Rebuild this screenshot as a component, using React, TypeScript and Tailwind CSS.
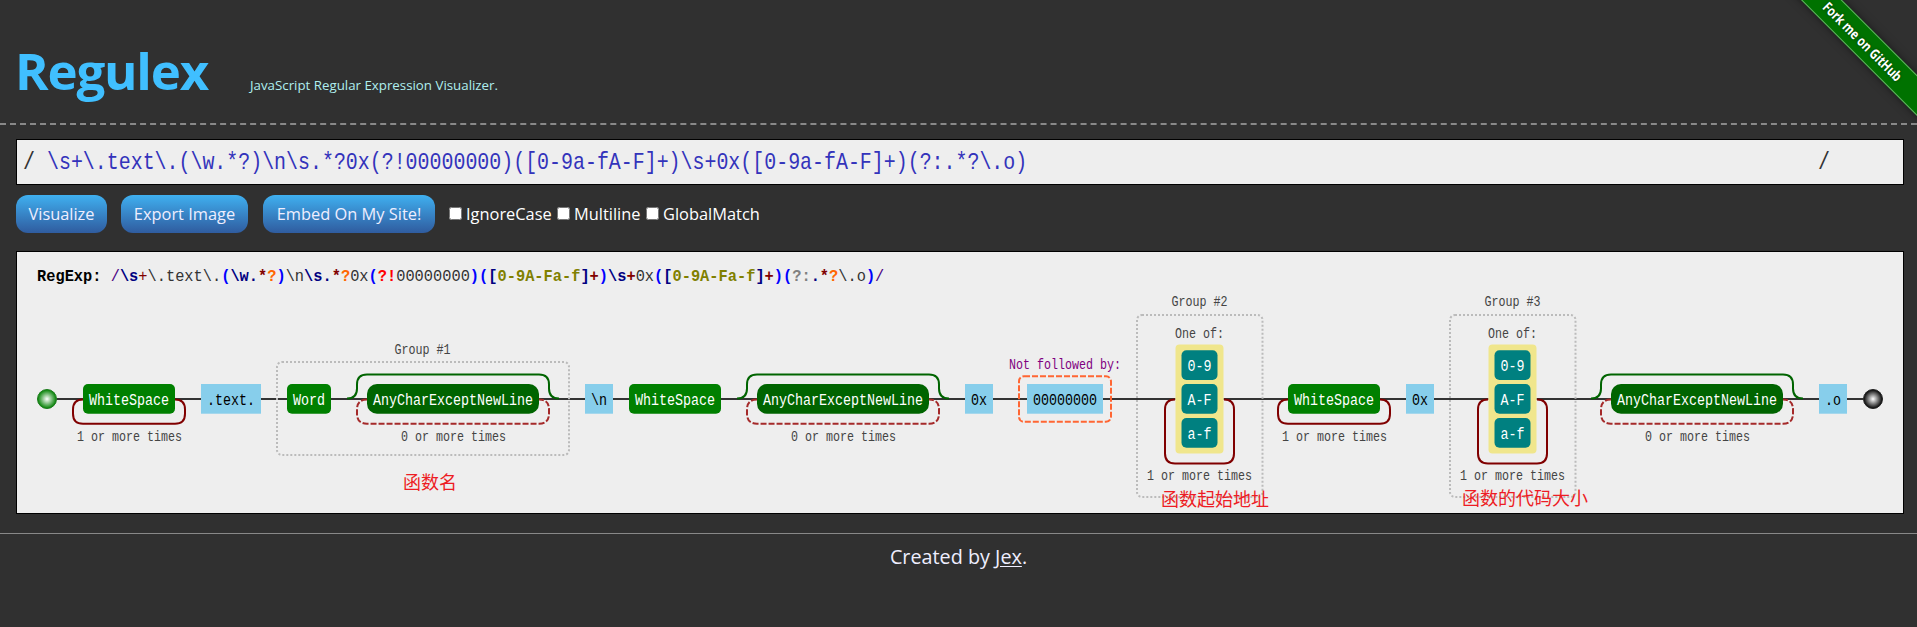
import React from "react";

const SANS = "font-['Open_Sans','Noto_Sans',sans-serif]";
const MONO = "'Liberation Mono', monospace";

type Tone = { s: string; c: string; b?: boolean };

const tokens: Tone[] = [
  { s: "RegExp:", c: "#000", b: true },
  { s: " ", c: "#000" },
  { s: "/", c: "#4b0082" },
  { s: "\\s", c: "#000080", b: true },
  { s: "+", c: "#800000" },
  { s: "\\.text\\.", c: "#333" },
  { s: "(", c: "#0000ff", b: true },
  { s: "\\w.", c: "#000080", b: true },
  { s: "*", c: "#800000", b: true },
  { s: "?", c: "#ff6600", b: true },
  { s: ")", c: "#0000ff", b: true },
  { s: "\\n", c: "#333" },
  { s: "\\s.", c: "#000080", b: true },
  { s: "*", c: "#800000", b: true },
  { s: "?", c: "#ff6600", b: true },
  { s: "0x", c: "#333" },
  { s: "(", c: "#0000ff", b: true },
  { s: "?!", c: "#ff0000", b: true },
  { s: "00000000", c: "#333" },
  { s: ")", c: "#0000ff", b: true },
  { s: "(", c: "#0000ff", b: true },
  { s: "[", c: "#000080", b: true },
  { s: "0-9A-Fa-f", c: "#808000", b: true },
  { s: "]", c: "#000080", b: true },
  { s: "+", c: "#800000", b: true },
  { s: ")", c: "#0000ff", b: true },
  { s: "\\s", c: "#000080", b: true },
  { s: "+", c: "#800000", b: true },
  { s: "0x", c: "#333" },
  { s: "(", c: "#0000ff", b: true },
  { s: "[", c: "#000080", b: true },
  { s: "0-9A-Fa-f", c: "#808000", b: true },
  { s: "]", c: "#000080", b: true },
  { s: "+", c: "#800000", b: true },
  { s: ")", c: "#0000ff", b: true },
  { s: "(", c: "#0000ff", b: true },
  { s: "?:", c: "#808080", b: true },
  { s: ".", c: "#000080", b: true },
  { s: "*", c: "#800000", b: true },
  { s: "?", c: "#ff6600", b: true },
  { s: "\\.o", c: "#333" },
  { s: ")", c: "#0000ff", b: true },
  { s: "/", c: "#4b0082" },
];

const tokenColumns = tokens.reduce((n, t) => n + t.s.length, 0);

function Mono({ x, y, size, fill, children }: {
  x: number; y: number; size: number; fill: string; children: string;
}) {
  return (
    <text
      x={x}
      y={y}
      fontFamily={MONO}
      fontSize={size}
      fill={fill}
      textLength={children.length * (size / 2)}
      lengthAdjust="spacingAndGlyphs"
    >
      {children}
    </text>
  );
}

function Label({ cx, y, children, fill = "#444" }: { cx: number; y: number; children: string; fill?: string }) {
  return <Mono x={cx - children.length * 3.5} y={y} size={14} fill={fill}>{children}</Mono>;
}

function Node({ x, y = 384, fill, color, r = 0, children }: {
  x: number; y?: number; fill: string; color: string; r?: number; children: string;
}) {
  return (
    <g>
      <rect x={x} y={y} width={children.length * 8 + 12} height={29.7} rx={r} fill={fill} />
      <Mono x={x + 6} y={y + 21} size={16} fill={color}>{children}</Mono>
    </g>
  );
}

function Exact({ x, children }: { x: number; children: string }) {
  return <Node x={x} fill="#87ceeb" color="#000">{children}</Node>;
}

function loopPath(x1: number, x2: number, bottom: number) {
  return `M${x1 + 10} 399.5q-10 0 -10 10V${bottom - 10}q0 10 10 10H${x2 - 10}q10 0 10 -10V409.5q0 -10 -10 -10`;
}

function Space({ x }: { x: number }) {
  return <Node x={x} fill="#008000" color="#fff" r={5}>WhiteSpace</Node>;
}

function LoopedSpace({ x }: { x: number }) {
  return (
    <g>
      <path d={loopPath(x - 10, x + 102, 423.7)} fill="none" stroke="#800000" strokeWidth={2} />
      <Space x={x} />
      <Label cx={x + 46.5} y={441}>1 or more times</Label>
    </g>
  );
}

function AnyChar({ x }: { x: number }) {
  return (
    <g>
      <path
        d={`M${x - 20} 398.5q10 0 10 -10V384.5q0 -10 10 -10H${x + 172}q10 0 10 10V388.5q0 10 10 10`}
        fill="none"
        stroke="#006400"
        strokeWidth={2}
      />
      <path d={loopPath(x - 10, x + 182, 423.7)} fill="none" stroke="#a52a2a" strokeWidth={2} strokeDasharray="6 2" />
      <Node x={x} fill="#006400" color="#fff" r={10}>AnyCharExceptNewLine</Node>
      <Label cx={x + 86.5} y={441}>0 or more times</Label>
    </g>
  );
}

function HexGroup({ x, n }: { x: number; n: number }) {
  const cx = x + 62.5;
  return (
    <g>
      <rect x={x} y={315} width={125.5} height={182} rx={5} fill="none" stroke="#bbb" strokeWidth={2} strokeDasharray="2 2" />
      <Label cx={cx} y={306}>{`Group #${n}`}</Label>
      <path d={loopPath(x + 28, x + 97, 463.5)} fill="none" stroke="#800000" strokeWidth={2} />
      <rect x={x + 38.5} y={344.5} width={48} height={109} rx={4} fill="#f0e68c" />
      <Label cx={cx} y={338}>One of:</Label>
      <Node x={x + 44.5} y={350.3} fill="#008080" color="#fff" r={5}>0-9</Node>
      <Node x={x + 44.5} y={384.1} fill="#008080" color="#fff" r={5}>A-F</Node>
      <Node x={x + 44.5} y={418} fill="#008080" color="#fff" r={5}>a-f</Node>
      <Label cx={cx} y={480}>1 or more times</Label>
    </g>
  );
}

function Note({ x, y, children }: { x: number; y: number; children: string }) {
  return (
    <text x={x} y={y} fontSize={18} fill="#ed1c24" fontFamily="'Noto Sans CJK SC', sans-serif">{children}</text>
  );
}

function Diagram() {
  return (
    <svg className="block h-[262px] w-[1887px]" viewBox="17 252 1887 262">
      <defs>
        <radialGradient id="start">
          <stop offset="0" stopColor="#fff" />
          <stop offset="1" stopColor="#008000" />
        </radialGradient>
        <radialGradient id="end">
          <stop offset="0" stopColor="#fff" />
          <stop offset="1" stopColor="#000" />
        </radialGradient>
      </defs>
      <text
        x={37}
        y={281}
        fontFamily={MONO}
        fontSize={17}
        textLength={tokenColumns * 9.21}
        lengthAdjust="spacingAndGlyphs"
        className="whitespace-pre"
      >
        {tokens.map((t, i) => (
          <tspan key={i} fill={t.c} fontWeight={t.b ? 700 : 400}>{t.s}</tspan>
        ))}
      </text>

      <path d="M57 399H1175.5M1223.5 399H1488.5M1536.5 399H1863" stroke="#333" strokeWidth={2} />
      <circle cx={47} cy={399} r={9.5} fill="url(#start)" stroke="#1c7c1c" />
      <circle cx={1873} cy={399} r={9.5} fill="url(#end)" stroke="#222" />

      <LoopedSpace x={83} />
      <Exact x={201}>.text.</Exact>

      <rect x={277} y={362} width={292} height={93} rx={5} fill="none" stroke="#bbb" strokeWidth={2} strokeDasharray="2 2" />
      <Label cx={422.5} y={353.5}>Group #1</Label>
      <Node x={287} fill="#008000" color="#fff" r={5}>Word</Node>
      <AnyChar x={367} />

      <Exact x={585}>\n</Exact>
      <Space x={629} />
      <AnyChar x={757} />
      <Exact x={965}>0x</Exact>

      <rect x={1019} y={376.3} width={92} height={45.5} rx={5} fill="none" stroke="#ff6633" strokeWidth={2} strokeDasharray="6 2" />
      <Label cx={1065} y={369} fill="#800080">Not followed by:</Label>
      <Exact x={1027}>00000000</Exact>

      <HexGroup x={1137} n={2} />
      <LoopedSpace x={1288} />
      <Exact x={1406}>0x</Exact>
      <HexGroup x={1450} n={3} />
      <AnyChar x={1611} />
      <Exact x={1819}>.o</Exact>

      <Note x={403} y={488.5}>函数名</Note>
      <Note x={1161} y={505.5}>函数起始地址</Note>
      <Note x={1462} y={505}>函数的代码大小</Note>
    </svg>
  );
}

function Action({ className, children }: { className: string; children: string }) {
  return (
    <button
      className={`flex h-[38px] items-center justify-center rounded-[12px] bg-linear-to-b from-[#3fb0f0] to-[#2f5c9f] pt-[1px] text-[16.4px] whitespace-nowrap text-[#eef] ${className}`}
    >
      {children}
    </button>
  );
}

function Flag({ className, children }: { className: string; children: string }) {
  return (
    <label className={`flex items-center gap-[4px] ${className}`}>
      <input type="checkbox" className="size-[13px] shrink-0" />
      <span className="pt-[1px] whitespace-nowrap">{children}</span>
    </label>
  );
}

export default function App() {
  return (
    <div className={`relative h-[627px] w-[1917px] overflow-hidden bg-[#303030] ${SANS}`}>
      <header className="flex h-[125px] items-baseline border-b-2 border-dashed border-[#888] pt-[34px] pl-[15px]">
        <h1 className="w-[235px] text-[51px] leading-[72px] font-bold tracking-[-1.2px] text-[#40bfff]">Regulex</h1>
        <p className="text-[13.3px] text-[#afeeee]">JavaScript Regular Expression Visualizer.</p>
      </header>

      <main className="pl-[16px]">
        <div className="mt-[14px] flex h-[46px] w-[1888px] items-center border border-black bg-[#eee] pt-[2px] font-['Liberation_Mono',monospace] text-[24px] leading-[42px] text-[#333]">
          <span className="w-[30px] pl-[6px]">
            <span className="inline-block origin-left scale-x-[0.8333]">/</span>
          </span>
          <span className="w-[1771px] whitespace-pre text-[#33b]">
            <span className="inline-block origin-left scale-x-[0.83]">{"\\s+\\.text\\.(\\w.*?)\\n\\s.*?0x(?!00000000)([0-9a-fA-F]+)\\s+0x([0-9a-fA-F]+)(?:.*?\\.o)"}</span>
          </span>
          <span className="origin-left scale-x-[0.8333]">/</span>
        </div>

        <div className="mt-[10px] flex h-[38px] items-center text-[16.4px] text-white">
          <Action className="w-[91px]">Visualize</Action>
          <Action className="ml-[14px] w-[127px]">Export Image</Action>
          <Action className="ml-[15px] w-[172px]">Embed On My Site!</Action>
          <Flag className="ml-[14px] w-[108px]">IgnoreCase</Flag>
          <Flag className="w-[89px]">Multiline</Flag>
          <Flag className="w-[120px]">GlobalMatch</Flag>
        </div>

        <div className="mt-[18px] h-[263px] w-[1888px] overflow-hidden border border-black bg-[#eee]">
          <Diagram />
        </div>
      </main>

      <footer className="mt-[19px] border-t border-[#888] pt-[9px] text-center text-[19.8px] leading-[28px] text-[#eef]">
        Created by <a className="underline underline-offset-2">Jex</a>.
      </footer>

      <div className="absolute top-[27px] left-[1753px] flex h-[29px] w-[220px] rotate-45 items-center justify-center border-y border-[#62b062] bg-[#007200] text-[14px] font-bold text-white shadow-[0_0_8px_rgba(0,0,0,0.5)]">
        <span className="scale-x-[0.8] whitespace-nowrap [text-shadow:0_0_3px_rgba(0,0,0,0.5)]">Fork me on GitHub</span>
      </div>
    </div>
  );
}
